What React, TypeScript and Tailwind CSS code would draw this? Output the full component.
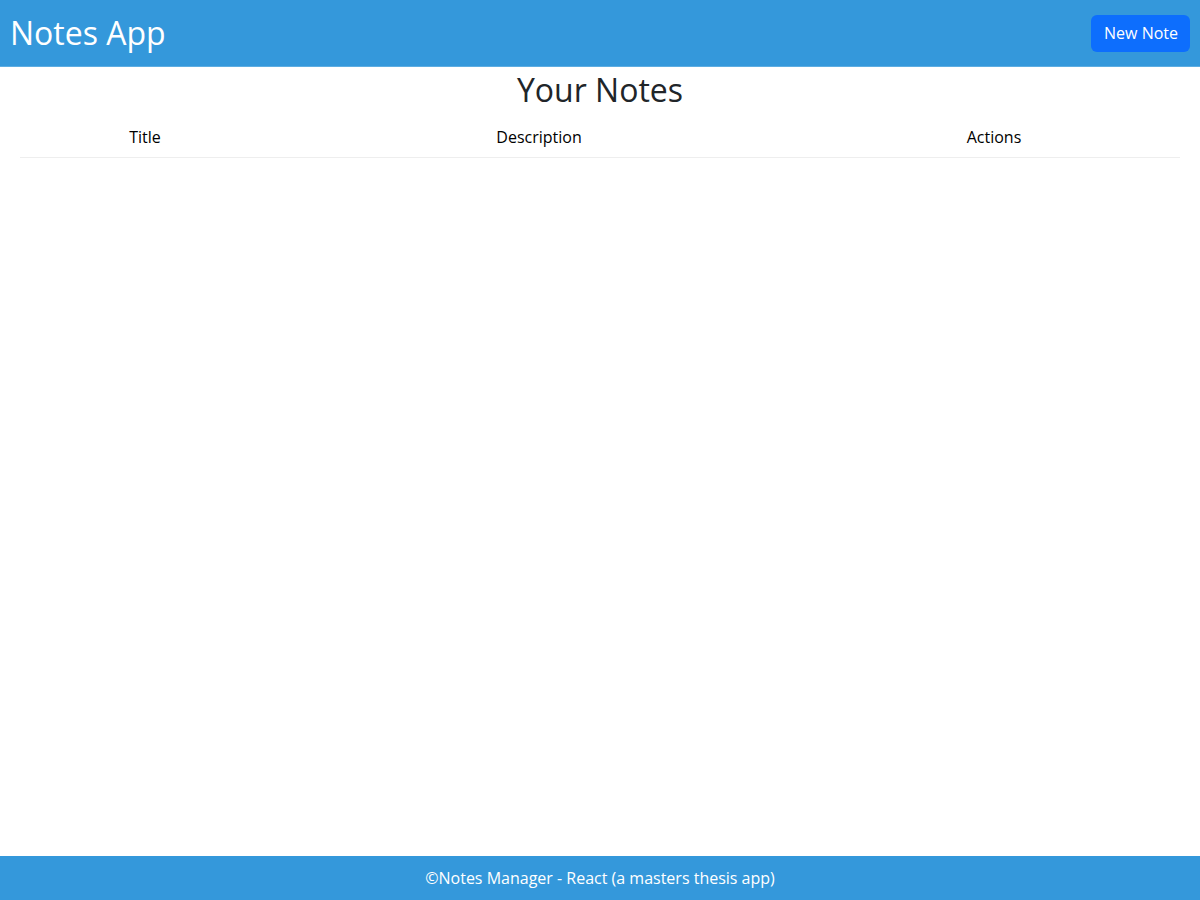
import React from 'react';

type Note = { id: string; title: string; description: string };

const notes: Note[] = [];

export default function App() {
  return (
    <div className="flex min-h-[900px] flex-col bg-white font-['Open_Sans',sans-serif] text-[#212529]">
      <header className="flex h-[67px] items-center justify-between border-b border-[#5dade2] bg-[#3498db] pl-[10px] pr-[10px]">
        <h1 className="text-[32px] leading-[38px] text-white">Notes App</h1>
        <button
          type="button"
          className="h-[37px] rounded-md bg-[#0d6efd] pr-3 pl-[13px] text-base text-white"
        >
          New Note
        </button>
      </header>

      <main className="flex-1 px-5">
        <h2 className="mt-1 mb-2 text-center text-[32px] leading-[38px]">Your Notes</h2>
        <table className="w-full border-collapse">
          <thead>
            <tr className="border-b border-[#eeeeee]">
              <th className="w-[250px] py-2 text-center text-base font-medium leading-6 text-black">Title</th>
              <th className="w-[538px] py-2 text-center text-base font-medium leading-6 text-black">Description</th>
              <th className="py-2 text-center text-base font-medium leading-6 text-black">Actions</th>
            </tr>
          </thead>
          <tbody>
            {notes.map((note) => (
              <tr key={note.id}>
                <td>{note.title}</td>
                <td>{note.description}</td>
                <td />
              </tr>
            ))}
          </tbody>
        </table>
      </main>

      <footer className="flex h-[44px] items-center justify-center bg-[#3498db] text-base text-white">
        ©Notes Manager - React (a masters thesis app)
      </footer>
    </div>
  );
}
